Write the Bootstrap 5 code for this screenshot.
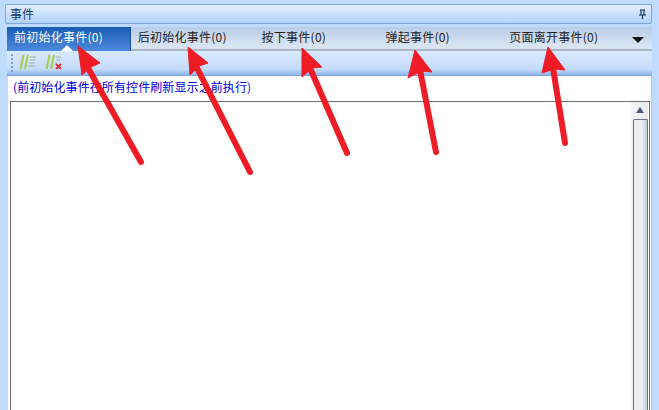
<!DOCTYPE html>
<html lang="zh">
<head>
    <meta charset="UTF-8">
    <meta name="viewport" content="width=device-width, initial-scale=1.0">
    <title>事件</title>
    <link rel="stylesheet" href="https://cdn.jsdelivr.net/npm/bootstrap@5.3.2/dist/css/bootstrap.min.css">
    <style>
        html, body { height: 100%; }
        body { background: #bfdbff; font: 12px/16px "Noto Sans CJK SC", "Liberation Sans", sans-serif; color: #15428b; overflow: hidden; }
        .shell { height: 410px; padding: 4px 7px 0 5px; }
        .title-bar { height: 20px; padding: 0 4px; border: 1px solid #7ea6dc; border-radius: 2px; background: linear-gradient(#e3efff, #b4d2fb); color: #10356e; }
        .tab-row { height: 24px; margin: 3px 0 0 2px; background: linear-gradient(#b9cde6, #d9e4f2 85%); border-bottom: 2px solid #a9b6c8; }
        .tab-row .nav-link { width: 123.8px; height: 24px; padding: 2px 0 0 7px; color: #222; white-space: nowrap; position: relative; border-radius: 0; letter-spacing: .25px; }
        .tab-row .nav-link.active { background: linear-gradient(#195bb4, #4d8ade); color: #fff; border-right: 1px solid #1b4f9c; }
        .tab-row .nav-link.active::after { content: ""; position: absolute; left: 54px; bottom: 0; border: 6px solid transparent; border-top: 0; border-bottom-color: #fff; }
        .tab-more { width: 0; height: 0; margin: 10px 8px 0 auto; border: 6px solid transparent; border-top: 6px solid #111; border-bottom: 0; }
        .tool-bar { height: 25px; margin-left: 2px; padding: 3px 0 0 4px; background: linear-gradient(#d9e8fd, #c6dcfb 75%, #8fb5ea); border-bottom: 1px solid #7ea6dc; }
        .grip { width: 2px; height: 18px; margin-right: 6px; background: repeating-linear-gradient(#7f9fc8 0 2px, transparent 2px 4px); }
        .main-panel { height: 334px; margin-left: 3px; padding: 3px 1px 0 2px; background: #fff; border-right: 1px solid #b6c8df; }
        .hint { height: 22px; padding-left: 3px; color: #0000e0; letter-spacing: .1px; }
        .list-box { height: 320px; border: 1px solid #6d6d6d; border-bottom: 0; padding-right: 1px; }
        .scroll-rail { width: 17px; background: linear-gradient(90deg, #f3f3f5, #e7e9ee); }
        .scroll-up { width: 0; height: 0; margin: 5px auto 6px; border: 4.5px solid transparent; border-top: 0; border-bottom: 6px solid #4b5a78; }
        .scroll-thumb { height: 300px; margin-left: 2px; border: 1px solid #68708a; border-bottom: 0; border-radius: 2px 2px 0 0; background: linear-gradient(90deg, #eceef2 55%, #c6cfdc); }
        .arrows { position: absolute; left: 0; top: 0; pointer-events: none; }
    </style>
</head>

<body>
    <div class="shell">
        <!-- Titulo -->
        <div class="title-bar d-flex align-items-center justify-content-between">
            <span>事件</span>
            <svg width="9" height="11" viewBox="0 0 9 11"><path d="M2 1h5M3 1v5M6 1v5M1 6h7M4.5 6v4" fill="none" stroke="#15315e" stroke-width="1.2"/></svg>
        </div>

        <!-- Tabs -->
        <div class="tab-row d-flex">
            <ul class="nav flex-nowrap">
                <li class="nav-item"><a class="nav-link active" href="#">前初始化事件(0)</a></li>
                <li class="nav-item"><a class="nav-link" href="#">后初始化事件(0)</a></li>
                <li class="nav-item"><a class="nav-link" href="#">按下事件(0)</a></li>
                <li class="nav-item"><a class="nav-link" href="#">弹起事件(0)</a></li>
                <li class="nav-item"><a class="nav-link" href="#">页面离开事件(0)</a></li>
            </ul>
            <span class="tab-more"></span>
        </div>

        <!-- Toolbar -->
        <div class="tool-bar d-flex align-items-start">
            <span class="grip"></span>
            <svg class="me-2" width="18" height="16" viewBox="0 0 18 16">
                <path d="M4.5 1 1.5 15M9 1 6 15" stroke="#a4cc48" stroke-width="2" fill="none"/>
                <path d="M11 3h6M11 6h5M10 9h6M9 12h7" stroke="#a2b0a0" stroke-width="1" fill="none"/>
            </svg>
            <svg width="18" height="17" viewBox="0 0 18 17">
                <path d="M4.5 1 1.5 15M9 1 6 15" stroke="#a4cc48" stroke-width="2" fill="none"/>
                <path d="M11 3h5M11 6h4M10 9h2" stroke="#a2b0a0" stroke-width="1" fill="none"/>
                <path d="M11 10 16 15M16 10 11 15" stroke="#e0303c" stroke-width="2" fill="none"/>
            </svg>
        </div>

        <!-- Contenido -->
        <div class="main-panel">
            <div class="hint">(前初始化事件在所有控件刷新显示之前执行)</div>
            <div class="list-box d-flex justify-content-end">
                <div class="scroll-rail">
                    <div class="scroll-up"></div>
                    <div class="scroll-thumb"></div>
                </div>
            </div>
        </div>
    </div>

    <!-- Flechas sobre la captura -->
    <svg class="arrows" width="659" height="410" viewBox="0 0 659 410">
        <g fill="#ee1c25" stroke="#ee1c25" stroke-width="1" stroke-linejoin="round">
            <path d="M78 46 100 63 91 67 82 75Z"/>
            <path d="M188 47 208 63 199 66 190 75Z"/>
            <path d="M302 48 322 67 312 68 302 77Z"/>
            <path d="M415 50 432 72 421 71 408 78Z"/>
            <path d="M548 47 565 70 554 69 542 73Z"/>
        </g>
        <g stroke="#ee1c25" stroke-width="6" stroke-linecap="round" fill="none">
            <path d="M88 68 141 162"/>
            <path d="M197 68 250 172"/>
            <path d="M310 68 347 153"/>
            <path d="M420 70 436 152"/>
            <path d="M553 68 565 143"/>
        </g>
    </svg>

    <script src="https://cdn.jsdelivr.net/npm/bootstrap@5.3.2/dist/js/bootstrap.bundle.min.js"></script>
</body>

</html>
